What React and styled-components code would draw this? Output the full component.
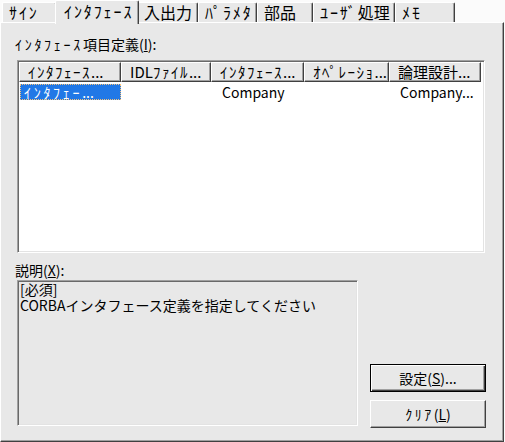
import React from 'react';
import styled, { createGlobalStyle, css } from 'styled-components';

const FONT = `"Noto Sans CJK JP", "Noto Sans CJK SC", sans-serif`;

const Global = createGlobalStyle`
  html, body { margin: 0; padding: 0; background: #fbfbfb; }
  body { font-family: ${FONT}; }
`;

const Window = styled.div`
  width: 505px;
  height: 442px;
  display: flex;
  flex-direction: column;
  background: #fbfbfb;
  font-family: ${FONT};
  font-size: 14px;
  color: #000;
  overflow: hidden;
`;

const TabStrip = styled.div`
  height: 22px;
  flex: none;
  display: flex;
  align-items: flex-end;
  padding-left: 2px;
  position: relative;
  z-index: 1;
  --hw: 1.9px;
`;

const Tab = styled.div`
  box-sizing: border-box;
  flex: none;
  width: ${p => p.$w}px;
  height: 20px;
  padding-left: 6px;
  background: #e8e8e8;
  border-top: 1px solid #fff;
  border-left: 1px solid #fff;
  border-right: 1px solid #404040;
  box-shadow: inset -1px 0 #a0a0a0;
  border-radius: 2px 2px 0 0;
  font-size: 16px;
  line-height: 18px;
  white-space: nowrap;
  position: relative;
  z-index: 1;
  ${p => p.$active && css`
    height: 24px;
    margin: 0 -2px -2px;
    padding-left: 8px;
    line-height: 20px;
    z-index: 2;
  `}
`;

const Panel = styled.div`
  flex: 1;
  box-sizing: border-box;
  width: 504px;
  background: #e8e8e8;
  border-top: 1px solid #fff;
  border-left: 1px solid #fff;
  border-right: 1px solid #404040;
  border-bottom: 1px solid #404040;
  box-shadow: inset -1px -1px #a0a0a0;
  padding: 13px 0 0 14px;
  display: flex;
  flex-direction: column;
  --hw: 2.7px;
`;

const Label = styled.div`
  font-size: 14px;
  line-height: 16px;
  height: 16px;
  white-space: nowrap;
`;

const Hw = styled.span`
  letter-spacing: var(--hw, 2px);
`;

const sunken = css`
  box-sizing: border-box;
  border: 1px solid;
  border-color: #a0a0a0 #fff #fff #a0a0a0;
  box-shadow: inset 1px 1px #696969, inset -1px -1px #e3e3e3;
  padding: 1px;
`;

const ListView = styled.div`
  ${sunken}
  margin: 8px 0 0 2px;
  width: 468px;
  height: 193px;
  background: #fff;
  display: flex;
  flex-direction: column;
`;

const HeaderRow = styled.div`
  display: flex;
  height: 20px;
  flex: none;
`;

const HeaderCell = styled.div`
  box-sizing: border-box;
  flex: none;
  width: ${p => p.$w}px;
  height: 20px;
  background: #e8e8e8;
  border-top: 1px solid #fff;
  border-left: 1px solid #fff;
  border-right: 1px solid #404040;
  border-bottom: 1px solid #404040;
  box-shadow: inset -1px -1px #a0a0a0;
  padding-left: 8px;
  font-size: 15px;
  line-height: 18px;
  white-space: nowrap;
  --hw: 1.5px;
`;

const Row = styled.div`
  display: flex;
  height: 16px;
  margin-top: 2px;
`;

const Cell = styled.div`
  box-sizing: border-box;
  flex: none;
  width: ${p => p.$w}px;
  height: 16px;
  padding-left: 11px;
  font-size: 14px;
  line-height: 16px;
  white-space: nowrap;
  ${p => p.$selected && css`
    margin-left: 1px;
    width: ${p.$w - 1}px;
    padding-left: 4px;
    background: #2178e6;
    color: #fff;
    outline: 1px dotted #f5c27a;
    outline-offset: -1px;
  `}
`;

const Bottom = styled.div`
  display: flex;
  align-items: flex-end;
  gap: 12px;
  margin-top: 9px;
`;

const DescColumn = styled.div`
  display: flex;
  flex-direction: column;
  padding-bottom: 2px;
`;

const DescBox = styled.div`
  ${sunken}
  margin: 2px 0 0 2px;
  width: 341px;
  height: 146px;
  background: #e8e8e8;
  padding: 0 2px;
  font-size: 14px;
  line-height: 16px;
`;

const ButtonColumn = styled.div`
  display: flex;
  flex-direction: column;
  gap: 8px;
`;

const Button = styled.button`
  box-sizing: border-box;
  width: 116px;
  height: 28px;
  padding: 0;
  background: #e8e8e8;
  font-family: ${FONT};
  font-size: 14px;
  line-height: 24px;
  color: #000;
  border: 1px solid;
  border-color: #fff #404040 #404040 #fff;
  box-shadow: inset -1px -1px #a0a0a0;
  --hw: 2.5px;
  ${p => p.$default && css`
    border-color: #000;
    box-shadow: inset 1px 1px #fff, inset -1px -1px #404040, inset -2px -2px #a0a0a0;
  `}
`;

const jp = s =>
  s.split(/([\uFF61-\uFF9F]+)/).map((part, i) =>
    /[\uFF61-\uFF9F]/.test(part) ? <Hw key={i}>{part}</Hw> : part
  );

const tabs = [
  { label: 'ｻｲﾝ', w: 55 },
  { label: 'ｲﾝﾀﾌｪｰｽ', w: 84, active: true },
  { label: '入出力', w: 61 },
  { label: 'ﾊﾟﾗﾒﾀ', w: 59 },
  { label: '部品', w: 56 },
  { label: 'ﾕｰｻﾞ処理', w: 82 },
  { label: 'ﾒﾓ', w: 60 },
];

const columns = [
  { label: 'ｲﾝﾀﾌｪｰｽ...', w: 102 },
  { label: 'IDLﾌｧｲﾙ...', w: 90 },
  { label: 'ｲﾝﾀﾌｪｰｽ...', w: 93 },
  { label: 'ｵﾍﾟﾚｰｼｮ...', w: 85 },
  { label: '論理設計...', w: 92 },
];

const rows = [['ｲﾝﾀﾌｪｰ...', '', 'Company', '', 'Company...']];

export default function App() {
  return (
    <>
      <Global />
      <Window>
        <TabStrip>
          {tabs.map(t => (
            <Tab key={t.label} $w={t.w} $active={t.active}>{jp(t.label)}</Tab>
          ))}
        </TabStrip>
        <Panel>
          <Label>{jp('ｲﾝﾀﾌｪｰｽ項目定義')}(<u>I</u>):</Label>
          <ListView>
            <HeaderRow>
              {columns.map((c, i) => (
                <HeaderCell key={i} $w={c.w}>{jp(c.label)}</HeaderCell>
              ))}
            </HeaderRow>
            {rows.map((r, ri) => (
              <Row key={ri}>
                {r.map((v, ci) => (
                  <Cell key={ci} $w={columns[ci].w} $selected={ci === 0}>{jp(v)}</Cell>
                ))}
              </Row>
            ))}
          </ListView>
          <Bottom>
            <DescColumn>
              <Label>説明(<u>X</u>):</Label>
              <DescBox>
                [必須]<br />
                CORBAインタフェース定義を指定してください
              </DescBox>
            </DescColumn>
            <ButtonColumn>
              <Button $default>設定(<u>S</u>)...</Button>
              <Button>{jp('ｸﾘｱ')}(<u>L</u>)</Button>
            </ButtonColumn>
          </Bottom>
        </Panel>
      </Window>
    </>
  );
}
